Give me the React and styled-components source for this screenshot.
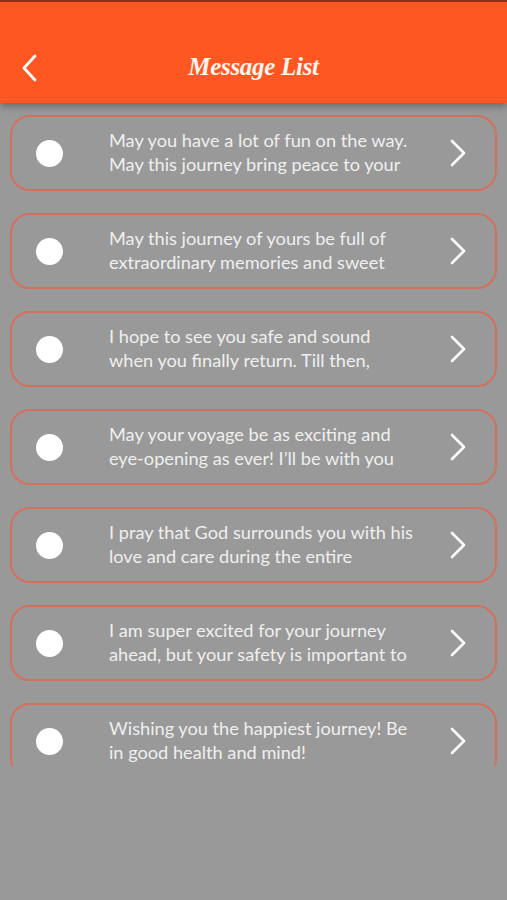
import React from "react";
import styled, { createGlobalStyle } from "styled-components";

const Global = createGlobalStyle`
  html, body { margin: 0; padding: 0; background: #999999; }
  body { width: 507px; height: 900px; overflow: hidden; font-family: "Lato", "Open Sans", sans-serif; }
  * { box-sizing: border-box; }
`;

const Screen = styled.div`
  width: 507px;
  height: 900px;
  background: #999999;
  display: flex;
  flex-direction: column;
`;

const Header = styled.header`
  position: relative;
  z-index: 2;
  height: 103px;
  flex: none;
  background: #ff5722;
  border-top: 2px solid #8a3518;
  box-shadow: 0 3px 8px rgba(0, 0, 0, 0.35);
  display: grid;
  grid-template-columns: 60px 1fr 60px;
  align-items: center;
  padding-top: 30px;
`;

const BackButton = styled.button`
  background: none;
  border: none;
  padding: 0 0 0 20px;
  height: 30px;
  display: flex;
  align-items: center;
  cursor: pointer;
`;

const Title = styled.h1`
  margin: 0;
  text-align: center;
  color: #fff6ef;
  font-family: "Liberation Serif", "DejaVu Serif", serif;
  font-style: italic;
  font-weight: 700;
  font-size: 25px;
  letter-spacing: -0.3px;
  transform: translateY(-1px);
`;

const List = styled.div`
  height: 663px;
  overflow: hidden;
  padding: 12px 10px 0 10px;
  display: flex;
  flex-direction: column;
  gap: 22px;
`;

const Card = styled.div`
  flex: none;
  height: 76px;
  border: 2px solid #d4705c;
  border-radius: 20px;
  display: flex;
  align-items: center;
  padding-left: 24px;
  padding-right: 28px;
`;

const Dot = styled.span`
  flex: none;
  width: 27px;
  height: 27px;
  border-radius: 50%;
  background: #ffffff;
`;

const Text = styled.p`
  margin: -2px 0 0 46px;
  flex: none;
  color: #efefef;
  font-family: "Lato", "Open Sans", sans-serif;
  font-size: 18.2px;
  line-height: 24px;
`;

const Line = styled.span`
  display: block;
  white-space: nowrap;
`;

const Chevron = styled.span`
  margin-left: auto;
  display: flex;
  align-items: center;
`;

const messages = [
  ["May you have a lot of fun on the way.", "May this journey bring peace to your"],
  ["May this journey of yours be full of", "extraordinary memories and sweet"],
  ["I hope to see you safe and sound", "when you finally return. Till then,"],
  ["May your voyage be as exciting and", "eye-opening as ever! I\u2019ll be with you"],
  ["I pray that God surrounds you with his", "love and care during the entire"],
  ["I am super excited for your journey", "ahead, but your safety is important to"],
  ["Wishing you the happiest journey! Be", "in good health and mind!"],
];

const ChevronIcon = () => (
  <svg width="18" height="28" viewBox="0 0 18 28" fill="none">
    <path d="M3 2 L15 14 L3 26" stroke="#ffffff" strokeWidth="2.6" strokeLinecap="round" strokeLinejoin="round" />
  </svg>
);

const BackIcon = () => (
  <svg width="18" height="28" viewBox="0 0 18 28" fill="none">
    <path d="M15 2 L4 14 L15 26" stroke="#ffffff" strokeWidth="2.8" strokeLinecap="round" strokeLinejoin="round" />
  </svg>
);

export default function App() {
  return (
    <>
      <Global />
      <Screen>
        <Header>
          <BackButton aria-label="Back">
            <BackIcon />
          </BackButton>
          <Title>Message List</Title>
          <span />
        </Header>
        <List>
          {messages.map((lines, i) => (
            <Card key={i}>
              <Dot />
              <Text>
                {lines.map((l, j) => (
                  <Line key={j}>{l}</Line>
                ))}
              </Text>
              <Chevron>
                <ChevronIcon />
              </Chevron>
            </Card>
          ))}
        </List>
      </Screen>
    </>
  );
}
